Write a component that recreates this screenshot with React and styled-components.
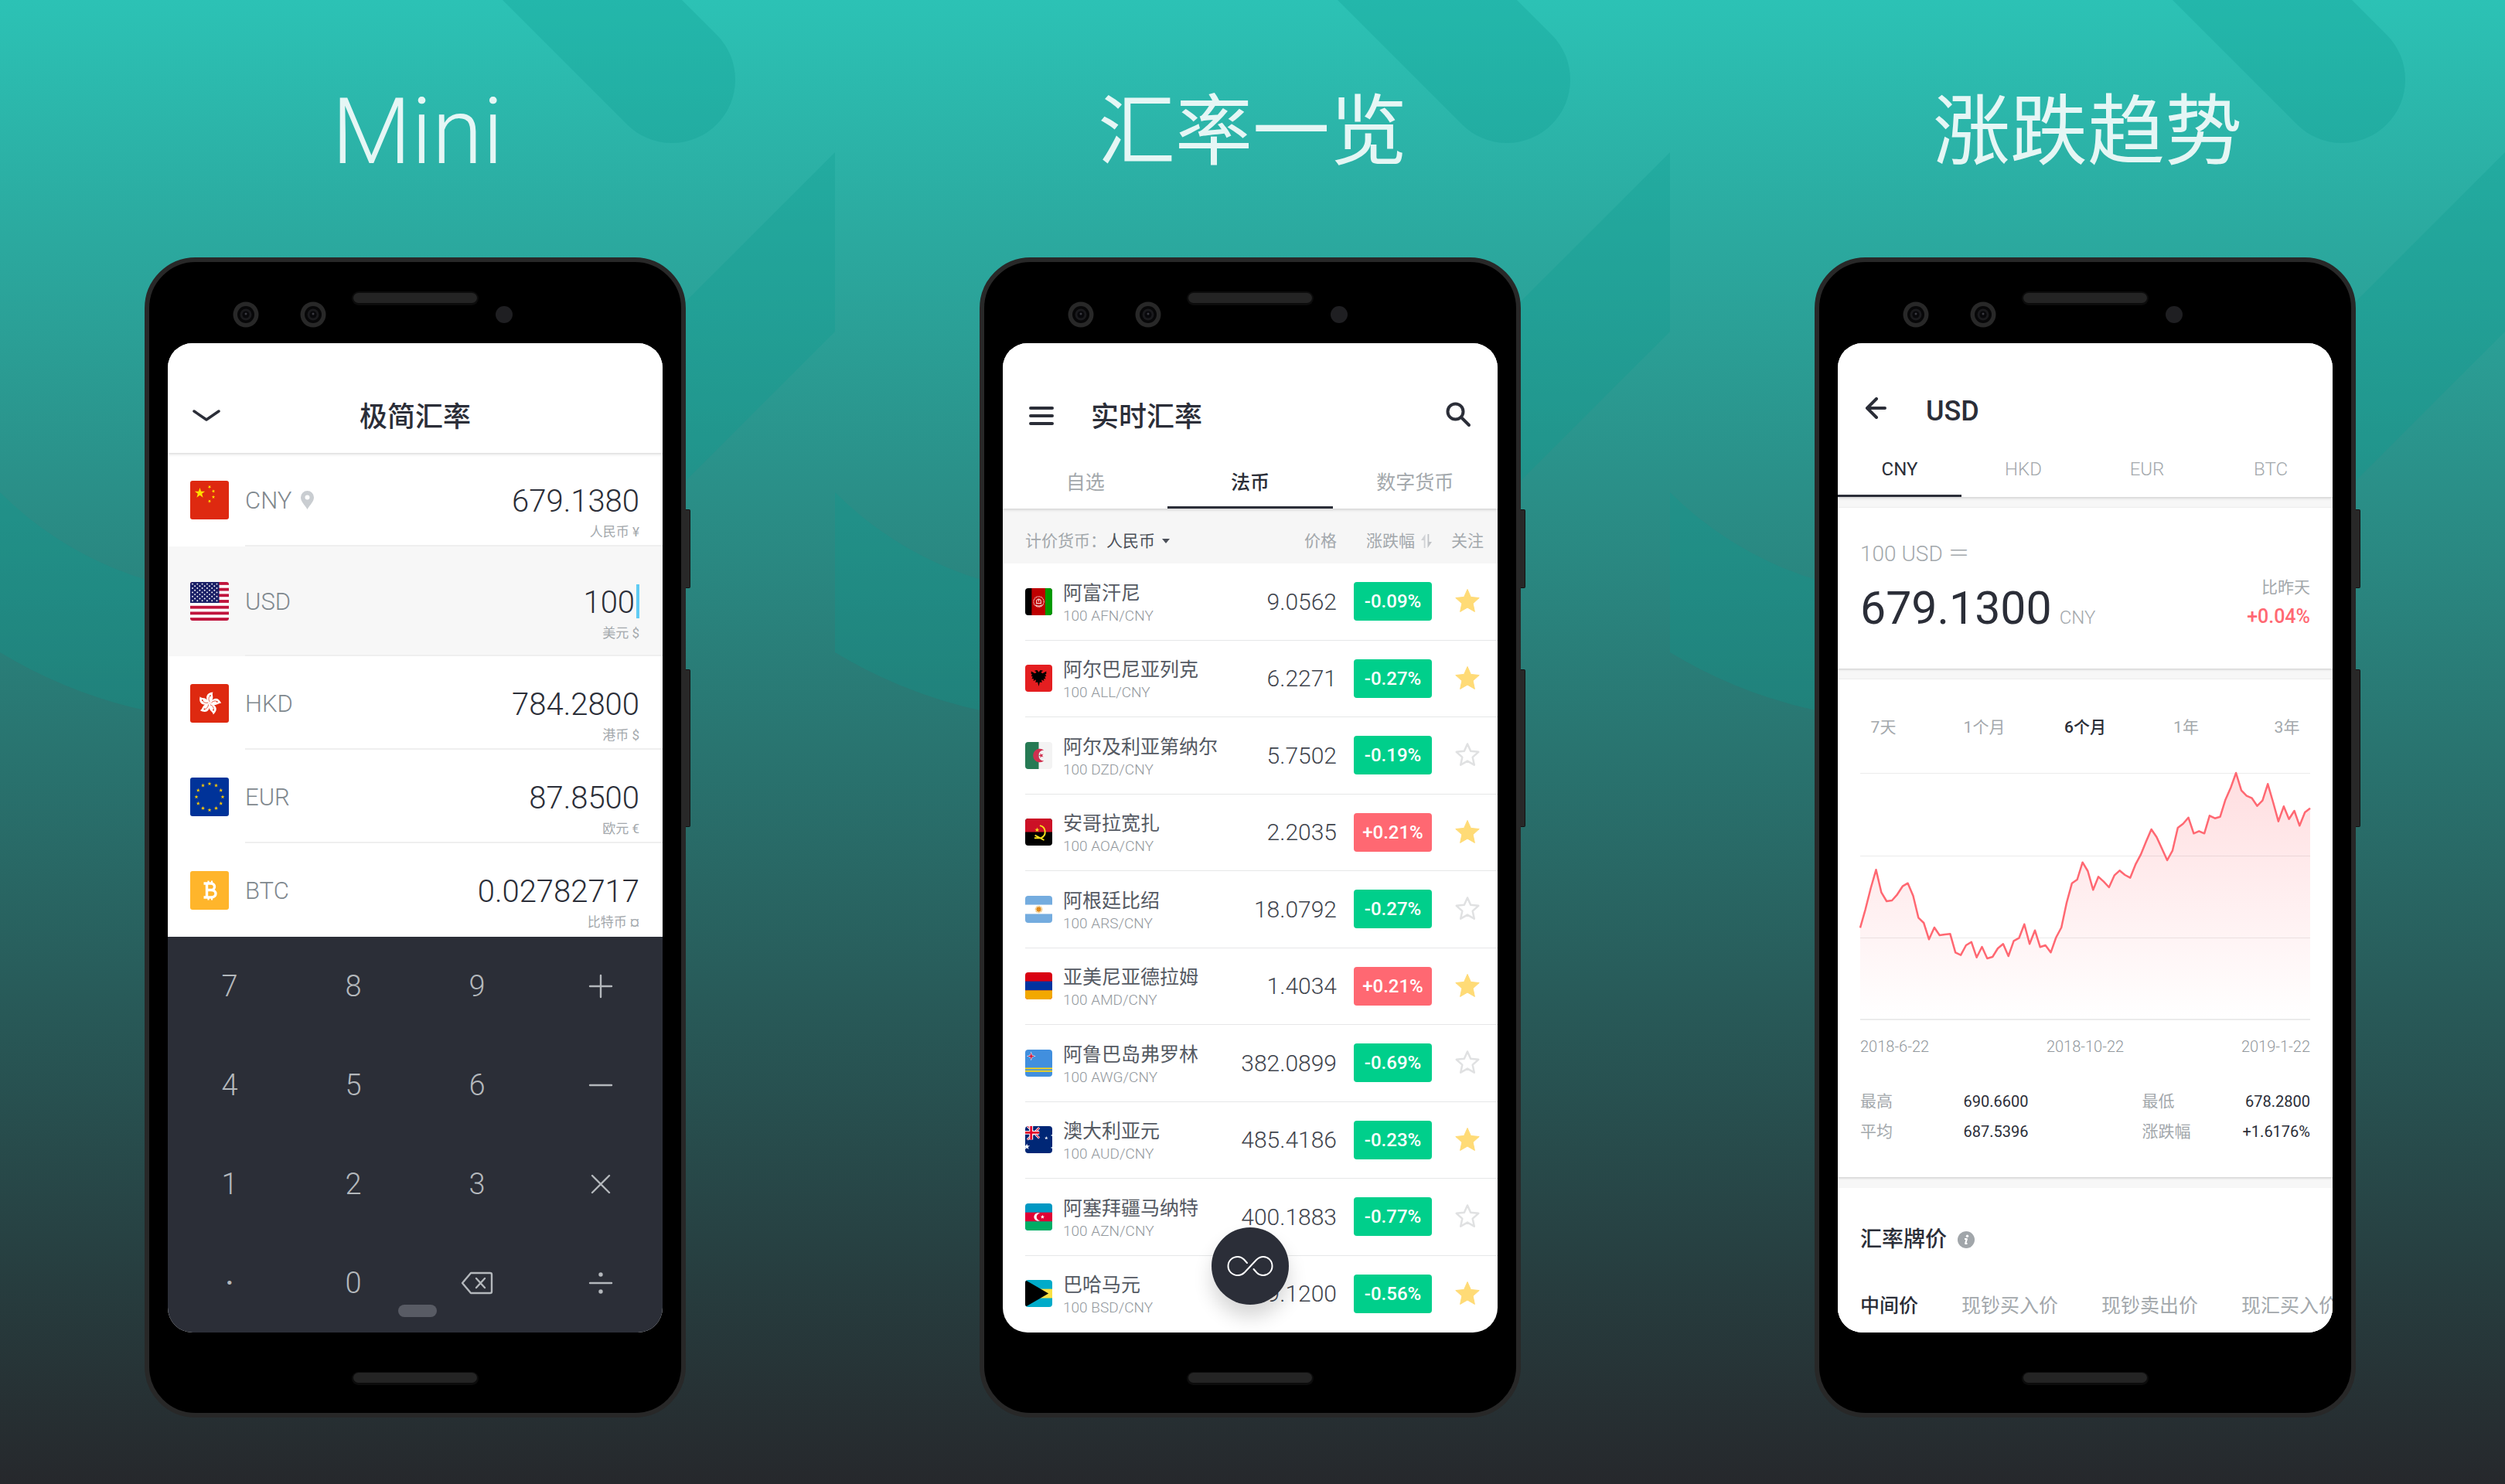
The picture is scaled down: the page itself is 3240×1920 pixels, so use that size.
import React from "react";
import styled, { createGlobalStyle, css } from "styled-components";

const INK = "#2b2e38";
const MUTED = "#a3a8ac";
const UP = "#ff6872";
const DOWN = "#00cf8b";

const GlobalStyle = createGlobalStyle`
  *, *::before, *::after { box-sizing: border-box; }
  body {
    margin: 0;
    background: #26282c;
    color: ${INK};
    font-family: Roboto, "Noto Sans CJK SC", sans-serif;
  }
  h1, h2, h3, p, dl, dd { margin: 0; font-weight: inherit; }
  button, input, select {
    margin: 0; padding: 0; border: 0; border-radius: 0; background: none;
    color: inherit; font: inherit;
  }
  svg { display: block; flex: none; }
`;

/* ---------- Poster ---------- */

const Page = styled.main`
  display: grid;
  grid-template-columns: repeat(3, minmax(0, 1fr));
  min-height: 100vh;
`;

const Panel = styled.section`
  position: relative;
  overflow: hidden;
  display: flex;
  flex-direction: column;
  align-items: center;
  padding-bottom: 86px;
  background: linear-gradient(#2cc2b5, #26282c);
`;

const Backdrop = styled.svg`
  position: absolute;
  inset: 0;
  width: 100%;
  height: 100%;
`;

const Headline = styled.h1`
  position: relative;
  height: 333px;
  line-height: 341px;
  font-size: ${(p) => (p.$latin ? 119 : 100)}px;
  font-weight: ${(p) => (p.$latin ? 300 : 400)};
  color: rgba(255, 255, 255, 0.88);
`;

/* ---------- Handset ---------- */

const Phone = styled.div`
  position: relative;
  width: 100%;
  max-width: 706px;
  padding-right: 6px;
`;

const Body = styled.div`
  padding: 0 24px;
  border: 6px solid #282828;
  border-radius: 66px;
  background: #000;
`;

const SideKey = styled.span`
  position: absolute;
  right: 0;
  top: ${(p) => p.$top}px;
  width: 6px;
  height: ${(p) => p.$length}px;
  border: 1px solid #111;
  border-left: 0;
  border-radius: 0 2px 2px 0;
  background: #282828;
`;

const Chin = styled.div`
  display: flex;
  justify-content: center;
  height: 104px;
  padding-top: 52px;
`;

const Grille = styled.span`
  width: 160px;
  height: 13px;
  border-radius: 7px;
  background: #242424;
  box-shadow: 0 1px 0 2px #0c0c0c;
`;

const Screen = styled.article`
  position: relative;
  display: flex;
  flex-direction: column;
  height: 1280px;
  overflow: hidden;
  border-radius: 32px;
  background: #fff;
`;

/* ---------- App bar and tabs ---------- */

const AppBar = styled.header`
  position: relative;
  z-index: 1;
  background: #fff;
  box-shadow: 0 1px 4px rgba(0, 0, 0, 0.2);
`;

const BarRow = styled.div`
  display: grid;
  grid-template-columns: ${(p) => (p.$centered ? "48px 1fr 48px" : "48px 1fr auto")};
  align-items: center;
  column-gap: ${(p) => (p.$centered ? 0 : 40)}px;
  height: ${(p) => (p.$compact ? 127 : 142)}px;
  padding: ${(p) => (p.$compact ? 45 : 46)}px 26px 0;
`;

const BarTitle = styled.h2`
  padding-top: 4px;
  font-size: 36px;
  font-weight: 500;
  line-height: 48px;
  text-align: ${(p) => (p.$centered ? "center" : "left")};
`;

const IconButton = styled.button`
  display: flex;
  align-items: center;
  justify-content: center;
  width: 48px;
  height: 48px;
  color: ${INK};
`;

const Tabs = styled.nav`
  display: flex;
`;

const Tab = styled.button`
  flex: 1;
  height: 72px;
  padding-top: 3px;
  border-bottom: 3px solid ${(p) => (p.$on ? INK : "transparent")};
  font-size: ${(p) => (p.$latin ? 24 : 25)}px;
  font-weight: ${(p) => (p.$on ? (p.$latin ? 400 : 500) : p.$latin ? 300 : 400)};
  color: ${(p) => (p.$on ? INK : MUTED)};
`;

/* ---------- Converter ---------- */

const ConvertRow = styled.div`
  display: flex;
  gap: 21px;
  padding-left: 29px;
  background: ${(p) => (p.$active ? "#f7f7f7" : "#fff")};
  --lead: ${(p) => (p.$active ? 46 : 36)}px;
  --tail: ${(p) => (p.$active ? 12 : 1)}px;
`;

const FlagSlot = styled.div`
  padding-top: var(--lead);
`;

const ConvertBody = styled.label`
  flex: 1;
  min-width: 0;
  display: flex;
  justify-content: space-between;
  padding: var(--lead) 30px var(--tail) 0;
  border-bottom: 2px solid ${(p) => (p.$last ? "transparent" : "#efefef")};
`;

const Code = styled.span`
  display: flex;
  align-items: center;
  gap: 12px;
  height: 50px;
  font-size: 31px;
  font-weight: 300;
  color: #7f888e;
`;

const AmountBlock = styled.span`
  display: flex;
  flex-direction: column;
  align-items: flex-end;
`;

const Amount = styled.input`
  width: 300px;
  height: 50px;
  padding-top: 2px;
  font-size: 40px;
  font-weight: 300;
  line-height: 48px;
  text-align: right;
  color: ${INK};
  outline: 0;
  ${(p) =>
    p.$active &&
    css`
      height: 44px;
      margin: 3px 0;
      padding-right: 2px;
      border-right: 4px solid #5fcbf3;
      line-height: 42px;
    `}
`;

const CurrencyNote = styled.span`
  font-size: 17px;
  line-height: 32px;
  color: ${MUTED};
`;

const Keypad = styled.div`
  flex: 1;
  display: grid;
  grid-template-columns: repeat(4, 1fr);
  grid-auto-rows: 1fr;
  background: #2b2e37;
`;

const Key = styled.button`
  display: flex;
  align-items: center;
  justify-content: center;
  font-size: 38px;
  font-weight: ${(p) => (p.$strong ? 500 : 300)};
  color: #b4b8bc;
`;

const HomePill = styled.span`
  position: absolute;
  left: 50%;
  bottom: 20px;
  width: 50px;
  height: 16px;
  margin-left: -22px;
  border-radius: 8px;
  background: #585b64;
`;

/* ---------- Rates table ---------- */

const RateTable = styled.table`
  flex: 1;
  display: flex;
  flex-direction: column;
`;

const RateHead = styled.thead`
  display: block;
  background: #f6f6f6;
`;

const RateBody = styled.tbody`
  flex: 1;
  display: grid;
  grid-auto-rows: 1fr;
`;

const rateColumns = css`
  display: grid;
  grid-template-columns: 35px 1fr 150px 101px 85px;
  align-items: center;
  margin-left: 29px;
`;

const HeadRow = styled.tr`
  ${rateColumns}
  height: 71px;
  padding-top: 13px;
`;

const RateRow = styled.tr`
  ${rateColumns}
  border-bottom: 1px solid #e6e7e8;
  &:last-child { border-bottom-color: transparent; }
`;

const HeadCell = styled.th`
  grid-column: span ${(p) => p.colSpan || 1};
  padding: 0 ${(p) => p.$trail || 0}px 0 ${(p) => p.$lead || 0}px;
  font-size: 21px;
  font-weight: 400;
  line-height: 30px;
  text-align: ${(p) => p.$align || "left"};
  color: ${MUTED};
`;

const BaseLabel = styled.label`
  display: flex;
  align-items: center;
`;

const BaseSelect = styled.select`
  appearance: none;
  width: 72px;
  color: #4b5059;
`;

const SortButton = styled.button`
  display: inline-flex;
  align-items: center;
  gap: 8px;
`;

const Cell = styled.td`
  padding: 0 ${(p) => p.$trail || 0}px 0 ${(p) => p.$lead || 0}px;
`;

const NameCell = styled(Cell)`
  padding: 5px 0 0 14px;
`;

const CurrencyName = styled.p`
  font-size: 25px;
  line-height: 32px;
  color: #555a63;
  white-space: nowrap;
`;

const Pair = styled.p`
  font-size: 19px;
  font-weight: 300;
  line-height: 26px;
  color: #92989d;
`;

const Price = styled(Cell)`
  font-size: 30px;
  font-weight: 300;
  text-align: right;
  color: #3f444d;
`;

const Change = styled.span`
  display: block;
  height: 50px;
  border-radius: 4px;
  font-size: 24px;
  font-weight: 500;
  line-height: 50px;
  text-align: center;
  color: #fff;
  background: ${(p) => (p.$up ? UP : DOWN)};
`;

const StarButton = styled.button`
  display: block;
  margin: 0 auto;
`;

const Fab = styled.button`
  position: absolute;
  left: 50%;
  bottom: 36px;
  display: flex;
  align-items: center;
  justify-content: center;
  width: 100px;
  height: 100px;
  margin-left: -50px;
  border-radius: 50px;
  background: ${INK};
  color: #fff;
  box-shadow: 0 16px 24px rgba(0, 0, 0, 0.16);
`;

/* ---------- Detail ---------- */

const Sheet = styled.div`
  flex: 1;
  display: flex;
  flex-direction: column;
  gap: 14px;
  padding-top: 14px;
  background: #f7f7f7;
`;

const Card = styled.section`
  padding: ${(p) => p.$pad};
  background: #fff;
  box-shadow: 0 1px 3px rgba(0, 0, 0, 0.2);
`;

const LastCard = styled(Card)`
  flex: 1;
  box-shadow: none;
`;

const Quote = styled.div`
  display: flex;
  justify-content: space-between;
  align-items: flex-end;
`;

const QuoteBase = styled.p`
  font-size: 28px;
  font-weight: 300;
  line-height: 36px;
  color: ${MUTED};
`;

const QuoteValue = styled.p`
  display: flex;
  align-items: baseline;
  gap: 10px;
  margin-top: 14px;
  font-size: 59px;
  line-height: 76px;
`;

const QuoteUnit = styled.span`
  font-size: 24px;
  font-weight: 300;
  color: ${MUTED};
`;

const Delta = styled.div`
  padding-bottom: 20px;
  text-align: right;
`;

const DeltaLabel = styled.p`
  font-size: 21px;
  line-height: 38px;
  color: ${MUTED};
`;

const DeltaValue = styled.p`
  font-size: 25px;
  font-weight: 500;
  line-height: 38px;
  color: ${UP};
`;

const Ranges = styled.nav`
  display: flex;
  justify-content: space-between;
  padding: 0 3px;
`;

const Range = styled.button`
  width: 54px;
  font-size: 21px;
  font-weight: ${(p) => (p.$on ? 500 : 400)};
  line-height: 32px;
  white-space: nowrap;
  color: ${(p) => (p.$on ? INK : MUTED)};
`;

const ChartBox = styled.svg`
  width: 100%;
  height: 320px;
  margin-top: 43px;
  overflow: visible;
`;

const Axis = styled.div`
  display: flex;
  justify-content: space-between;
  margin-top: 22px;
  font-size: 20px;
  font-weight: 300;
  line-height: 24px;
  color: #92989d;
`;

const Stats = styled.dl`
  display: grid;
  grid-template-columns: repeat(2, 1fr);
  gap: 9px 147px;
  margin-top: 44px;
`;

const Stat = styled.div`
  display: flex;
  justify-content: space-between;
  font-size: 21px;
  line-height: 30px;
`;

const StatName = styled.dt`
  color: ${MUTED};
`;

const StatValue = styled.dd`
  font-size: 20px;
  color: ${INK};
`;

const SectionTitle = styled.h3`
  display: flex;
  align-items: center;
  gap: 14px;
  font-size: 28px;
  font-weight: 500;
  line-height: 42px;
`;

const PriceTabs = styled.nav`
  display: flex;
  gap: 56px;
  margin-top: 45px;
  overflow: hidden;
`;

const PriceTab = styled.button`
  flex: none;
  font-size: 25px;
  font-weight: ${(p) => (p.$on ? 500 : 400)};
  line-height: 40px;
  white-space: nowrap;
  color: ${(p) => (p.$on ? INK : MUTED)};
`;

/* ---------- Flags ---------- */

const star = (cx, cy, r, turn = -90, inner = 0.4) =>
  Array.from({ length: 10 }, (_, i) => {
    const a = ((turn + i * 36) * Math.PI) / 180;
    const d = i % 2 ? r * inner : r;
    return `${(cx + d * Math.cos(a)).toFixed(2)},${(cy + d * Math.sin(a)).toFixed(2)}`;
  }).join(" ");

const Star = ({ x, y, r, fill, turn }) => <polygon points={star(x, y, r, turn)} fill={fill} />;

const flags = {
  CNY: (
    <>
      <rect width="50" height="50" fill="#de2910" />
      <Star x={12.5} y={16} r={7} fill="#ffde00" />
      <Star x={25} y={8} r={2.4} fill="#ffde00" turn={20} />
      <Star x={30} y={13.5} r={2.4} fill="#ffde00" turn={-40} />
      <Star x={30} y={21} r={2.4} fill="#ffde00" />
      <Star x={25} y={26.5} r={2.4} fill="#ffde00" turn={20} />
    </>
  ),
  USD: (
    <>
      <rect width="50" height="50" fill="#fff" />
      {Array.from({ length: 7 }, (_, i) => (
        <rect key={i} y={(i * 100) / 13} width="50" height={50 / 13} fill="#c0143c" />
      ))}
      <rect width="37.5" height="27" fill="#1a1f66" />
      {Array.from({ length: 9 }, (_, r) =>
        Array.from({ length: r % 2 ? 5 : 6 }, (_, c) => (
          <circle key={`${r}-${c}`} cx={3 + c * 6.3 + (r % 2) * 3.1} cy={2.6 + r * 2.7} r="0.95" fill="#fff" />
        ))
      )}
    </>
  ),
  HKD: (
    <>
      <rect width="50" height="50" fill="#de2910" />
      {[0, 72, 144, 216, 288].map((a) => (
        <g key={a} transform={`rotate(${a + 8} 25 25)`}>
          <path d="M25 25C18 20 18 12 27.500 10C25.500 14 32 17 25 25Z" fill="#fff" />
          <path d="M25 23C22.500 20 22.800 17 24.500 15" fill="none" stroke="#de2910" strokeWidth="0.7" />
          <circle cx="24.600" cy="15" r="0.9" fill="#de2910" />
        </g>
      ))}
    </>
  ),
  EUR: (
    <>
      <rect width="50" height="50" fill="#039" />
      {Array.from({ length: 12 }, (_, i) => {
        const a = (i * Math.PI) / 6;
        return <Star key={i} x={25 + 17 * Math.sin(a)} y={25 - 17 * Math.cos(a)} r={2.7} fill="#fc0" />;
      })}
    </>
  ),
  BTC: (
    <>
      <rect width="50" height="50" fill="#ffb52b" />
      <g fill="none" stroke="#fff" strokeWidth="3.400" strokeLinejoin="round">
        <path d="M17.500 16H27C33 16 33 24.500 27 24.500H21.500M27 24.500C35 24.500 35 34 27 34H17.500M21.500 16V34" />
        <path d="M23.500 12.500V16M28 12.500V16M23.500 34V37.500M28 34V37.500" strokeWidth="2.200" />
      </g>
    </>
  ),
  AFN: (
    <>
      <rect width="50" height="50" fill="#000" />
      <rect x="12" width="26" height="50" fill="#be0000" />
      <rect x="37" width="13" height="50" fill="#009a00" />
      <g fill="none" stroke="#f6d3d0" strokeWidth="1.600">
        <circle cx="25" cy="25" r="9.500" strokeDasharray="2 1" />
        <path d="M20 28H30M21 28V23Q25 17 29 23V28M25 20V25M19 31Q25 35 31 31" />
      </g>
    </>
  ),
  ALL: (
    <>
      <rect width="50" height="50" fill="#e41e20" />
      <path
        d="M25 14L22 10L17 11L21 14L18 16L11 12V17L13 18L11 21L14 22L12 26L16 26L15 30L20 28L19 33L23 32L25 40L27 32L31 33L30 28L35 30L34 26L38 26L36 22L39 21L37 18L39 17V12L32 16L29 14L33 11L28 10Z"
        fill="#000"
      />
    </>
  ),
  DZD: (
    <>
      <rect width="50" height="50" fill="#f3f3f3" />
      <rect width="25" height="50" fill="#267a54" />
      <path d="M34.500 15A12.500 12.500 0 1 0 34.500 35A10 10 0 1 1 34.500 15Z" fill="#d0304f" />
      <Star x={29.5} y={25} r={5} fill="#d0304f" turn={180} />
    </>
  ),
  AOA: (
    <>
      <rect width="50" height="50" fill="#000" />
      <rect width="50" height="25" fill="#cc1126" />
      <path d="M27 13A12 12 0 0 1 29 36L17 36M18 31L35 40" fill="none" stroke="#f9e01c" strokeWidth="2.800" />
      <Star x={22} y={21} r={4.5} fill="#f9e01c" />
    </>
  ),
  ARS: (
    <>
      <rect width="50" height="50" fill="#fff" />
      <rect width="50" height="16.500" fill="#74acdf" />
      <rect y="33.500" width="50" height="16.500" fill="#74acdf" />
      <circle cx="25" cy="25" r="6" fill="none" stroke="#e8b65a" strokeWidth="2" strokeDasharray="1.200 1" />
      <circle cx="25" cy="25" r="4.500" fill="#e08a1c" />
    </>
  ),
  AMD: (
    <>
      <rect width="50" height="50" fill="#d90012" />
      <rect y="16.600" width="50" height="16.800" fill="#0033a0" />
      <rect y="33.300" width="50" height="16.700" fill="#f2a800" />
    </>
  ),
  AWG: (
    <>
      <rect width="50" height="50" fill="#418fde" />
      <rect y="33.500" width="50" height="2.600" fill="#f9d616" />
      <rect y="38.500" width="50" height="2.600" fill="#f9d616" />
      <path d="M11 3.500L13 10L19.500 12L13 14L11 20.500L9 14L2.500 12L9 10Z" fill="#fff" />
      <path d="M11 5.500L12.400 10.600L17.500 12L12.400 13.400L11 18.500L9.600 13.400L4.500 12L9.600 10.600Z" fill="#d21034" />
    </>
  ),
  AUD: (
    <>
      <rect width="50" height="50" fill="#002776" />
      <path d="M4 0L26 22M26 3L4 25" stroke="#fff" strokeWidth="4" />
      <path d="M4 0L26 22M26 3L4 25" stroke="#e4002b" strokeWidth="1.500" />
      <path d="M11 0V25M0 12H26" stroke="#fff" strokeWidth="7" />
      <path d="M11 0V25M0 12H26" stroke="#e4002b" strokeWidth="4" />
      <Star x={3} y={38} r={6} fill="#fff" />
      <Star x={39} y={22} r={3.4} fill="#fff" />
      <Star x={49} y={17} r={2} fill="#fff" />
      <Star x={49} y={40} r={2} fill="#fff" />
    </>
  ),
  AZN: (
    <>
      <rect width="50" height="50" fill="#0098c3" />
      <rect y="16.600" width="50" height="17" fill="#e00034" />
      <rect y="33.500" width="50" height="16.500" fill="#00ae65" />
      <path d="M27.500 18.500A7.500 7.500 0 1 0 27.500 31.500A6.200 6.200 0 1 1 27.500 18.500Z" fill="#fff" />
      <Star x={32} y={25} r={4} fill="#fff" />
    </>
  ),
  BSD: (
    <>
      <rect width="50" height="50" fill="#00abc9" />
      <rect y="16.600" width="50" height="17" fill="#fae042" />
      <path d="M0 0L43 25L0 50Z" fill="#000" />
    </>
  ),
};

const FlagArt = styled.svg`
  border-radius: ${(p) => (p.width > 40 ? 3 : 4)}px;
  overflow: hidden;
`;

const Flag = ({ code, size }) => (
  <FlagArt width={size} height={size} viewBox="0 0 50 50" preserveAspectRatio="none" aria-hidden="true">
    {flags[code]}
  </FlagArt>
);

/* ---------- Icons ---------- */

const Stroke = ({ w, h, width = 2, children }) => (
  <svg
    width={w}
    height={h}
    viewBox={`0 0 ${w} ${h}`}
    fill="none"
    stroke="currentColor"
    strokeWidth={width}
    strokeLinecap="round"
    strokeLinejoin="round"
    aria-hidden="true"
  >
    {children}
  </svg>
);

const ChevronIcon = () => (
  <Stroke w={38} h={18} width={3.5}>
    <path d="M3 3L19 14L35 3" />
  </Stroke>
);
const MenuIcon = () => (
  <Stroke w={36} h={28} width={4}>
    <path d="M4 4H32M4 14H32M4 24H32" />
  </Stroke>
);
const SearchIcon = () => (
  <Stroke w={36} h={36} width={4}>
    <circle cx="13.500" cy="12.500" r="10" />
    <path d="M22 21L31 30" />
  </Stroke>
);
const BackIcon = () => (
  <Stroke w={32} h={32} width={4}>
    <path d="M27 14H5M16 2L4 14L16 26" />
  </Stroke>
);
const InfinityIcon = () => (
  <Stroke w={60} h={28} width={2}>
    <path d="M26 10L22 5.500C19.500 3 17 2 14 2C7 2 1.500 7 1.500 14C1.500 21 7 26 14 26C18 26 20.500 24.500 23 22L38 6C40.500 3.500 43 2 47 2C53 2 58.500 7 58.500 14C58.500 21 53 26 47 26C43.500 26 41 25 38.500 22.500L34.500 18" />
  </Stroke>
);
const PinIcon = () => (
  <svg width="17" height="24" viewBox="0 0 17 24" aria-hidden="true">
    <path fillRule="evenodd" d="M8.500 0A8.500 8.500 0 0 0 0 8.500C0 14 5 18 8.500 24C12 18 17 14 17 8.500A8.500 8.500 0 0 0 8.500 0ZM8.500 5.500A3 3 0 1 1 8.500 11.500A3 3 0 0 1 8.500 5.500Z" fill="#c9cdd1" />
  </svg>
);
const CaretIcon = () => (
  <svg width="10" height="6" viewBox="0 0 10 6" aria-hidden="true">
    <path d="M0 0H10L5 6Z" fill="#4b5059" />
  </svg>
);
const SortIcon = () => (
  <svg width="14" height="18" viewBox="0 0 14 18" aria-hidden="true">
    <path d="M5.500 0V18H3.700V8H0Z" fill="#d0d2d5" />
    <path d="M8.500 18V0H10.300V10H14Z" fill="#c0c3c7" />
  </svg>
);
const InfoIcon = () => (
  <svg width="22" height="22" viewBox="0 0 22 22" aria-hidden="true">
    <circle cx="11" cy="11" r="11" fill="#a1a6aa" />
    <circle cx="12.500" cy="6.200" r="1.700" fill="#fff" />
    <path d="M9 10H11.800L10.200 16H12.500" fill="none" stroke="#fff" strokeWidth="2.200" strokeLinejoin="round" />
  </svg>
);
const RateStar = ({ on }) => (
  <svg width="36" height="36" viewBox="0 0 36 36" aria-hidden="true">
    <polygon
      points={star(18, 18.5, on ? 16 : 15, -90, 0.47)}
      fill={on ? "#ffdb76" : "none"}
      stroke={on ? "#ffdb76" : "#e0e1e2"}
      strokeWidth={on ? 1 : 2.5}
      strokeLinejoin="round"
    />
  </svg>
);

/* ---------- Handset parts ---------- */

const Lens = ({ x }) => (
  <g>
    <circle cx={x} cy="68" r="16.500" fill="#282828" />
    <circle cx={x} cy="68" r="11" fill="#070708" />
    <circle cx={x} cy="68" r="7.500" fill="#1a1a1d" />
    <circle cx={x} cy="68" r="4.500" fill="#08080b" />
    <circle cx={x} cy="67" r="1.500" fill="#3a3a42" />
  </g>
);

const Forehead = () => (
  <svg width="100%" height="105" viewBox="0 0 640 105" aria-hidden="true">
    <Lens x={101} />
    <Lens x={188} />
    <rect x="238" y="38" width="164" height="18" rx="9" fill="#0c0c0c" />
    <rect x="240" y="40" width="160" height="13" rx="6.500" fill="#242424" />
    <circle cx="435" cy="68" r="11" fill="#1f1f22" />
  </svg>
);

const Handset = ({ children }) => (
  <Phone>
    <SideKey $top={326} $length={102} />
    <SideKey $top={533} $length={204} />
    <Body>
      <Forehead />
      <Screen>{children}</Screen>
      <Chin>
        <Grille />
      </Chin>
    </Body>
  </Phone>
);

const Poster = ({ title, latin, children }) => (
  <Panel>
    <Backdrop viewBox="0 0 1080 1920" preserveAspectRatio="xMidYMin slice" aria-hidden="true">
      <g fill="none" stroke="#0a9b8f" strokeOpacity="0.27" strokeWidth="164" strokeLinecap="round">
        <path d="M569 -197L869 103" />
        <path d="M-215 317A535 535 0 0 0 698 695L1300 93" />
      </g>
    </Backdrop>
    <Headline $latin={latin}>{title}</Headline>
    <Handset>{children}</Handset>
  </Panel>
);

/* ---------- Screens ---------- */

const holdings = [
  { code: "CNY", amount: "679.1380", note: "人民币 ¥", home: true },
  { code: "USD", amount: "100", note: "美元 $", active: true },
  { code: "HKD", amount: "784.2800", note: "港币 $" },
  { code: "EUR", amount: "87.8500", note: "欧元 €" },
  { code: "BTC", amount: "0.02782717", note: "比特币 ¤" },
];

const keys = [
  "7", "8", "9", "plus",
  "4", "5", "6", "minus",
  "1", "2", "3", "times",
  "·", "0", "erase", "divide",
];

const keyArt = {
  plus: <path d="M2 16H30M16 2V30" />,
  minus: <path d="M2 16H30" />,
  times: <path d="M5 5L27 27M27 5L5 27" />,
  divide: (
    <>
      <path d="M2 16H30" />
      <circle cx="16" cy="5" r="1.500" fill="currentColor" />
      <circle cx="16" cy="27" r="1.500" fill="currentColor" />
    </>
  ),
};

const KeyFace = ({ name }) => {
  if (name === "erase")
    return (
      <Stroke w={42} h={32} width={2.4}>
        <path d="M13 3H38Q40 3 40 5V27Q40 29 38 29H13L2 16Z" />
        <path d="M20 10L31 22M31 10L20 22" />
      </Stroke>
    );
  if (keyArt[name])
    return (
      <Stroke w={32} h={32} width={2.4}>
        {keyArt[name]}
      </Stroke>
    );
  return name;
};

const Converter = () => (
  <>
    <AppBar>
      <BarRow $centered>
        <IconButton aria-label="收起">
          <ChevronIcon />
        </IconButton>
        <BarTitle $centered>极简汇率</BarTitle>
      </BarRow>
    </AppBar>
    {holdings.map((h, i) => (
      <ConvertRow key={h.code} $active={h.active}>
        <FlagSlot>
          <Flag code={h.code} size={50} />
        </FlagSlot>
        <ConvertBody $last={i === holdings.length - 1}>
          <Code>
            {h.code}
            {h.home && <PinIcon />}
          </Code>
          <AmountBlock>
            <Amount $active={h.active} defaultValue={h.amount} inputMode="decimal" />
            <CurrencyNote>{h.note}</CurrencyNote>
          </AmountBlock>
        </ConvertBody>
      </ConvertRow>
    ))}
    <Keypad>
      {keys.map((k) => (
        <Key key={k} $strong={k === "·"} aria-label={k}>
          <KeyFace name={k} />
        </Key>
      ))}
    </Keypad>
    <HomePill />
  </>
);

const rates = [
  ["AFN", "阿富汗尼", "9.0562", "-0.09%", true],
  ["ALL", "阿尔巴尼亚列克", "6.2271", "-0.27%", true],
  ["DZD", "阿尔及利亚第纳尔", "5.7502", "-0.19%", false],
  ["AOA", "安哥拉宽扎", "2.2035", "+0.21%", true],
  ["ARS", "阿根廷比绍", "18.0792", "-0.27%", false],
  ["AMD", "亚美尼亚德拉姆", "1.4034", "+0.21%", true],
  ["AWG", "阿鲁巴岛弗罗林", "382.0899", "-0.69%", false],
  ["AUD", "澳大利亚元", "485.4186", "-0.23%", true],
  ["AZN", "阿塞拜疆马纳特", "400.1883", "-0.77%", false],
  ["BSD", "巴哈马元", "679.1200", "-0.56%", true],
];

const RateList = () => (
  <>
    <AppBar>
      <BarRow>
        <IconButton aria-label="菜单">
          <MenuIcon />
        </IconButton>
        <BarTitle>实时汇率</BarTitle>
        <IconButton aria-label="搜索">
          <SearchIcon />
        </IconButton>
      </BarRow>
      <Tabs>
        <Tab>自选</Tab>
        <Tab $on>法币</Tab>
        <Tab>数字货币</Tab>
      </Tabs>
    </AppBar>
    <RateTable>
      <RateHead>
        <HeadRow>
          <HeadCell colSpan={2}>
            <BaseLabel>
              计价货币：
              <BaseSelect defaultValue="人民币">
                <option>人民币</option>
              </BaseSelect>
              <CaretIcon />
            </BaseLabel>
          </HeadCell>
          <HeadCell $align="right" $trail={22}>价格</HeadCell>
          <HeadCell $align="right">
            <SortButton>
              涨跌幅
              <SortIcon />
            </SortButton>
          </HeadCell>
          <HeadCell $align="center" $lead={7}>关注</HeadCell>
        </HeadRow>
      </RateHead>
      <RateBody>
        {rates.map(([code, name, price, change, starred]) => (
          <RateRow key={code}>
            <Cell>
              <Flag code={code} size={35} />
            </Cell>
            <NameCell>
              <CurrencyName>{name}</CurrencyName>
              <Pair>100 {code}/CNY</Pair>
            </NameCell>
            <Price $trail={22}>{price}</Price>
            <Cell>
              <Change $up={change[0] === "+"}>{change}</Change>
            </Cell>
            <Cell $lead={7}>
              <StarButton aria-label="关注">
                <RateStar on={starred} />
              </StarButton>
            </Cell>
          </RateRow>
        ))}
      </RateBody>
    </RateTable>
    <Fab aria-label="换算">
      <InfinityIcon />
    </Fab>
  </>
);

/* Distance of each sample below the top grid line, on a scale where the base line is 957. */
const DEPTH = 957;
const series = [
  601, 529, 447, 376, 464, 498, 495, 472, 440, 428, 477, 562, 582, 646, 600, 630, 627, 625, 697, 707, 669, 656, 716,
  675, 720, 714, 681, 664, 711, 652, 641, 587, 664, 611, 676, 669, 697, 639, 600, 504, 428, 414, 347, 381, 454, 403,
  422, 444, 398, 379, 396, 407, 356, 317, 267, 219, 249, 294, 339, 301, 213, 197, 173, 235, 226, 235, 166, 176, 170,
  104, 57, 0, 68, 89, 98, 128, 107, 43, 114, 188, 130, 179, 147, 205, 153, 137,
];

const TrendChart = () => {
  const line = series.map((d, i) => `${((i * 582) / (series.length - 1)).toFixed(1)},${((d * 319) / DEPTH).toFixed(1)}`);
  return (
    <ChartBox viewBox="0 0 582 320" preserveAspectRatio="none" role="img" aria-label="涨跌趋势">
      <defs>
        <linearGradient id="trend" x1="0" y1="0" x2="0" y2="1">
          <stop offset="0" stopColor={UP} stopOpacity="0.22" />
          <stop offset="1" stopColor={UP} stopOpacity="0" />
        </linearGradient>
      </defs>
      <polygon points={`0,319 ${line.join(" ")} 582,319`} fill="url(#trend)" />
      <g stroke="#000" strokeOpacity="0.08">
        <path d="M0 0.5H582M0 107.500H582M0 213.500H582" />
        <path d="M0 319H582" strokeWidth="2" />
      </g>
      <polyline points={line.join(" ")} fill="none" stroke={UP} strokeWidth="2.500" strokeLinejoin="round" />
    </ChartBox>
  );
};

const stats = [
  ["最高", "690.6600"],
  ["最低", "678.2800"],
  ["平均", "687.5396"],
  ["涨跌幅", "+1.6176%"],
];

const Detail = () => (
  <>
    <AppBar>
      <BarRow $compact>
        <IconButton aria-label="返回">
          <BackIcon />
        </IconButton>
        <BarTitle>USD</BarTitle>
      </BarRow>
      <Tabs>
        {["CNY", "HKD", "EUR", "BTC"].map((c, i) => (
          <Tab key={c} $latin $on={i === 0}>
            {c}
          </Tab>
        ))}
      </Tabs>
    </AppBar>
    <Sheet>
      <Card $pad="42px 29px 28px">
        <Quote>
          <div>
            <QuoteBase>100 USD ＝</QuoteBase>
            <QuoteValue>
              679.1300 <QuoteUnit>CNY</QuoteUnit>
            </QuoteValue>
          </div>
          <Delta>
            <DeltaLabel>比昨天</DeltaLabel>
            <DeltaValue>+0.04%</DeltaValue>
          </Delta>
        </Quote>
      </Card>
      <Card $pad="46px 29px 44px">
        <Ranges>
          {["7天", "1个月", "6个月", "1年", "3年"].map((r, i) => (
            <Range key={r} $on={i === 2}>
              {r}
            </Range>
          ))}
        </Ranges>
        <TrendChart />
        <Axis>
          <span>2018-6-22</span>
          <span>2018-10-22</span>
          <span>2019-1-22</span>
        </Axis>
        <Stats>
          {stats.map(([name, value]) => (
            <Stat key={name}>
              <StatName>{name}</StatName>
              <StatValue>{value}</StatValue>
            </Stat>
          ))}
        </Stats>
      </Card>
      <LastCard $pad="46px 0 0 29px">
        <SectionTitle>
          汇率牌价
          <InfoIcon />
        </SectionTitle>
        <PriceTabs>
          {["中间价", "现钞买入价", "现钞卖出价", "现汇买入价"].map((t, i) => (
            <PriceTab key={t} $on={i === 0}>
              {t}
            </PriceTab>
          ))}
        </PriceTabs>
      </LastCard>
    </Sheet>
  </>
);

export default function App() {
  return (
    <>
      <GlobalStyle />
      <Page>
        <Poster title="Mini" latin>
          <Converter />
        </Poster>
        <Poster title="汇率一览">
          <RateList />
        </Poster>
        <Poster title="涨跌趋势">
          <Detail />
        </Poster>
      </Page>
    </>
  );
}
